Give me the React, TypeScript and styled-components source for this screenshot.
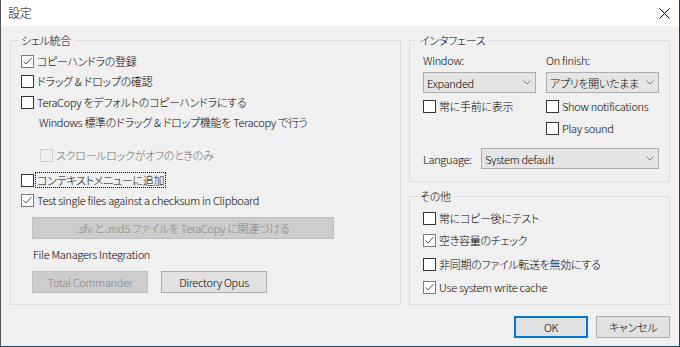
import React from "react";
import styled, { createGlobalStyle, css } from "styled-components";

const GlobalStyle = createGlobalStyle`
  html, body { margin: 0; padding: 0; background: #f0f0f0; }
  body {
    font-family: "Noto Sans CJK JP", "Noto Sans", sans-serif;
    font-size: 11px;
    font-weight: 300;
    letter-spacing: -0.3px;
    font-feature-settings: "palt";
    color: #000;
  }
  * { box-sizing: border-box; }
`;

const Window = styled.div`
  width: 680px;
  height: 347px;
  display: flex;
  flex-direction: column;
  background: #f0f0f0;
  border-left: 1px solid #4d5358;
  border-right: 1px solid #1d3c52;
  border-bottom: 1px solid #1e4c64;
`;

const TitleBar = styled.div`
  height: 26px;
  flex: none;
  background: #fff;
  display: flex;
  align-items: center;
  justify-content: space-between;
  padding: 0 9px 0 7px;
`;

const Title = styled.span`
  font-size: 12px;
  line-height: 14px;
`;

const Body = styled.div`
  flex: 1;
  display: flex;
  flex-direction: column;
  padding: 14px 9px 8px 9px;
`;

const Columns = styled.div`
  display: flex;
  gap: 8px;
  height: 265px;
`;

const RightColumn = styled.div`
  display: flex;
  flex-direction: column;
  gap: 14px;
  width: 261px;
`;

const Group = styled.div<{ $w: number; $h: number }>`
  position: relative;
  width: ${(p) => p.$w}px;
  height: ${(p) => p.$h}px;
  border: 1px solid #dcdcdc;
  display: flex;
  flex-direction: column;
`;

const Legend = styled.span`
  position: absolute;
  top: -8px;
  left: 7px;
  padding: 0 4px 0 3px;
  background: #f0f0f0;
  line-height: 14px;
`;

const Row = styled.div<{ $indent?: number; $mt?: number }>`
  display: flex;
  align-items: center;
  gap: 3px;
  height: 20px;
  margin-left: ${(p) => p.$indent ?? 0}px;
  margin-top: ${(p) => p.$mt ?? 0}px;
  white-space: nowrap;
`;

const Text = styled.span<{ $disabled?: boolean; $focus?: boolean }>`
  line-height: 14px;
  color: ${(p) => (p.$disabled ? "#6d6d6d" : "#000")};
  ${(p) =>
    p.$focus &&
    css`
      border: 1px dotted #000;
      padding: 0 1px;
      margin-left: -2px;
    `}
`;

const Box = styled.span<{ $checked?: boolean; $disabled?: boolean }>`
  width: 13px;
  height: 13px;
  flex: none;
  display: inline-flex;
  align-items: center;
  justify-content: center;
  background: ${(p) => (p.$disabled ? "#f0f0f0" : "#fff")};
  border: 1px solid
    ${(p) => (p.$disabled ? "#cccccc" : p.$checked ? "#7a7a7a" : "#333333")};
`;

const Button = styled.div<{ $w?: number; $disabled?: boolean; $default?: boolean }>`
  width: ${(p) => (p.$w ? `${p.$w}px` : "auto")};
  height: 22px;
  flex: none;
  display: flex;
  align-items: center;
  justify-content: center;
  white-space: nowrap;
  background: ${(p) => (p.$disabled ? "#cccccc" : "#e1e1e1")};
  color: ${(p) => (p.$disabled ? "#838383" : "#000")};
  border: ${(p) =>
    p.$default ? "2px solid #0078d7" : p.$disabled ? "1px solid #bfbfbf" : "1px solid #adadad"};
`;

const WideButton = styled(Button)`
  margin-left: 21px;
  margin-top: 7px;
  width: 302px;
`;

const ButtonRow = styled.div`
  display: flex;
  gap: 13px;
  margin-left: 21px;
  margin-top: 7px;
`;

const Note = styled.div<{ $indent: number; $mt?: number }>`
  height: 20px;
  display: flex;
  align-items: center;
  margin-left: ${(p) => p.$indent}px;
  margin-top: ${(p) => p.$mt ?? 0}px;
  line-height: 14px;
  white-space: nowrap;
`;

const LeftInner = styled.div`
  padding-top: 10px;
  display: flex;
  flex-direction: column;
`;

const IfaceInner = styled.div`
  padding: 9px 0 0 13px;
  display: flex;
  flex-direction: column;
`;

const TwoCols = styled.div`
  display: flex;
  gap: 10px;
`;

const Col = styled.div`
  width: 113px;
  display: flex;
  flex-direction: column;
`;

const Combo = styled.div<{ $w?: number; $mt?: number }>`
  width: ${(p) => (p.$w ? `${p.$w}px` : "100%")};
  height: 21px;
  margin-top: ${(p) => p.$mt ?? 0}px;
  background: #e5e5e5;
  border: 1px solid #acacac;
  display: flex;
  align-items: center;
  justify-content: space-between;
  gap: 2px;
  padding: 0 4px 0 3px;
  white-space: nowrap;
`;

const ComboValue = styled.span`
  overflow: hidden;
  line-height: 14px;
`;

const LangRow = styled.div`
  display: flex;
  align-items: center;
  margin-top: 10px;
`;

const LangLabel = styled.span`
  width: 58px;
  line-height: 14px;
`;

const OtherInner = styled.div`
  padding: 11px 0 0 13px;
  display: flex;
  flex-direction: column;
`;

const Footer = styled.div`
  display: flex;
  justify-content: flex-end;
  gap: 8px;
  margin-top: 11px;
`;

const Chevron = () => (
  <svg width="8" height="5" viewBox="0 0 8 5" style={{ flex: "none" }}>
    <polyline points="0.5,0.5 4,4 7.5,0.5" fill="none" stroke="#7a7a7a" strokeWidth="1" />
  </svg>
);

const CloseIcon = () => (
  <svg width="11" height="11" viewBox="0 0 11 11">
    <path d="M0.5 0.5 L10.5 10.5 M10.5 0.5 L0.5 10.5" stroke="#000" strokeWidth="1" />
  </svg>
);

const Check = ({
  label,
  checked,
  disabled,
  focus,
  indent,
  mt,
}: {
  label: string;
  checked?: boolean;
  disabled?: boolean;
  focus?: boolean;
  indent?: number;
  mt?: number;
}) => (
  <Row $indent={indent} $mt={mt}>
    <Box $checked={checked} $disabled={disabled}>
      {checked && (
        <svg width="11" height="11" viewBox="0 0 11 11">
          <polyline points="1.5,5.5 4,8 9.5,2" fill="none" stroke="#555" strokeWidth="1" />
        </svg>
      )}
    </Box>
    <Text $disabled={disabled} $focus={focus}>
      {label}
    </Text>
  </Row>
);

export default function App() {
  return (
    <>
      <GlobalStyle />
      <Window>
        <TitleBar>
          <Title>設定</Title>
          <CloseIcon />
        </TitleBar>
        <Body>
          <Columns>
            <Group $w={391} $h={265}>
              <Legend>シェル統合</Legend>
              <LeftInner>
                <Check indent={10} checked label="コピーハンドラの登録" />
                <Check indent={10} label="ドラッグ & ドロップの確認" />
                <Check indent={10} mt={1} label="TeraCopy をデフォルトのコピーハンドラにする" />
                <Note $indent={28}>Windows 標準のドラッグ & ドロップ機能を Teracopy で行う</Note>
                <Check indent={29} mt={13} disabled label="スクロールロックがオフのときのみ" />
                <Check indent={10} mt={5} focus label="コンテキストメニューに追加" />
                <Check indent={10} checked label="Test single files against a checksum in Clipboard" />
                <WideButton $disabled>.sfv と .md5 ファイルを TeraCopy に関連づける</WideButton>
                <Note $indent={22} $mt={5}>File Managers Integration</Note>
                <ButtonRow>
                  <Button $w={116} $disabled>Total Commander</Button>
                  <Button $w={106}>Directory Opus</Button>
                </ButtonRow>
              </LeftInner>
            </Group>
            <RightColumn>
              <Group $w={261} $h={142}>
                <Legend>インタフェース</Legend>
                <IfaceInner>
                  <TwoCols>
                    <Col>
                      <Note $indent={0}>Window:</Note>
                      <Combo $mt={2}>
                        <ComboValue>Expanded</ComboValue>
                        <Chevron />
                      </Combo>
                      <Check mt={3} label="常に手前に表示" />
                    </Col>
                    <Col>
                      <Note $indent={0}>On finish:</Note>
                      <Combo $mt={2}>
                        <ComboValue>アプリを開いたまま</ComboValue>
                        <Chevron />
                      </Combo>
                      <Check mt={3} label="Show notifications" />
                      <Check mt={2} label="Play sound" />
                    </Col>
                  </TwoCols>
                  <LangRow>
                    <LangLabel>Language:</LangLabel>
                    <Combo $w={178}>
                      <ComboValue>System default</ComboValue>
                      <Chevron />
                    </Combo>
                  </LangRow>
                </IfaceInner>
              </Group>
              <Group $w={261} $h={109}>
                <Legend>その他</Legend>
                <OtherInner>
                  <Check label="常にコピー後にテスト" />
                  <Check mt={2} checked label="空き容量のチェック" />
                  <Check mt={4} label="非同期のファイル転送を無効にする" />
                  <Check mt={3} checked label="Use system write cache" />
                </OtherInner>
              </Group>
            </RightColumn>
          </Columns>
          <Footer>
            <Button $w={74} $default>OK</Button>
            <Button $w={74}>キャンセル</Button>
          </Footer>
        </Body>
      </Window>
    </>
  );
}
